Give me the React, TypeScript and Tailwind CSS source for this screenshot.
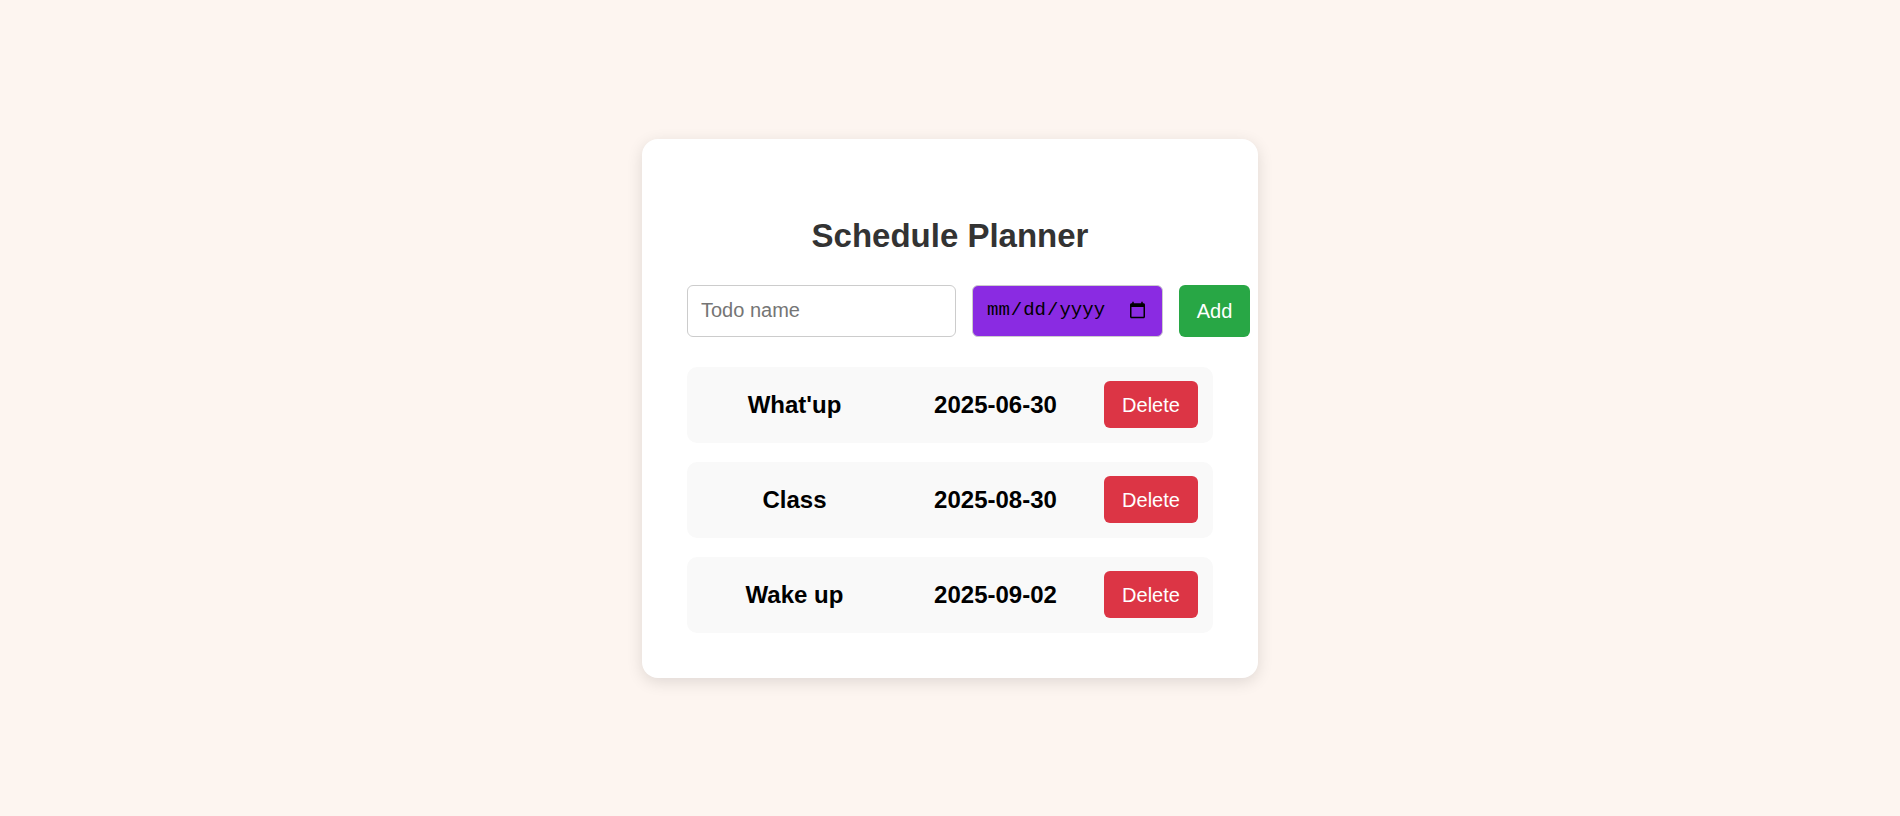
import React from "react";

const todos = [
  { name: "What'up", date: "2025-06-30" },
  { name: "Class", date: "2025-08-30" },
  { name: "Wake up", date: "2025-09-02" },
];

export default function App() {
  return (
    <div className="min-h-screen w-full bg-[#fdf5f0] flex items-center justify-center font-['Liberation_Sans',Arial,sans-serif]">
      <div className="w-[616px] bg-white rounded-[16px] shadow-[0_4px_16px_rgba(0,0,0,0.12)] pt-[78px] px-[45px] pb-[45px]">
        <h1 className="text-center text-[33px] leading-[37px] font-bold text-[#333]">Schedule Planner</h1>
        <div className="mt-[31px] flex gap-4">
          <input
            type="text"
            placeholder="Todo name"
            className="shrink-0 w-[269px] h-[52px] px-[13px] text-[20px] border border-[#ccc] rounded-md bg-white text-black placeholder:text-[#757575] outline-none"
          />
          <input
            type="date"
            className="shrink-0 w-[191px] h-[52px] pl-[13px] pr-[13px] text-[19px] font-['Liberation_Mono',monospace] border border-[#ccc] rounded-md bg-[#8a2be2] text-black outline-none"
          />
          <button className="shrink-0 w-[71px] h-[52px] bg-[#28a745] text-white text-[20px] rounded-md">Add</button>
        </div>
        <div className="mt-[30px] flex flex-col gap-[19px]">
          {todos.map((t) => (
            <div key={t.name} className="h-[76px] bg-[#f9f9f9] rounded-[10px] px-[15px] flex items-center gap-4">
              <div className="flex-1 text-center text-[24px] font-bold text-black">{t.name}</div>
              <div className="flex-1 text-center text-[24px] font-bold text-black">{t.date}</div>
              <button className="shrink-0 w-[94px] h-[47px] bg-[#dc3545] text-white text-[20px] rounded-md">Delete</button>
            </div>
          ))}
        </div>
      </div>
    </div>
  );
}
